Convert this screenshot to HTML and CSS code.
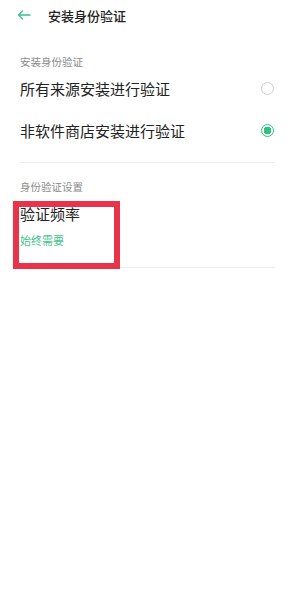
FILE: index.html
```html
<!DOCTYPE html>
<html lang="zh">
<head>
    <meta charset="UTF-8">
    <meta name="viewport" content="width=device-width, initial-scale=1.0">
    <title>安装身份验证</title>
    <link rel="stylesheet" href="styles.css">
</head>
<body>
    <!-- Header -->
    <div class="header">
        <svg class="back" width="14" height="10" viewBox="0 0 14 10">
            <path d="M13 5H1.5M5.5 1L1.5 5L5.5 9" fill="none" stroke="#3dbf8c" stroke-width="1.3" stroke-linecap="round" stroke-linejoin="round"/>
        </svg>
        <h1>安装身份验证</h1>
    </div>

    <!-- Install verification -->
    <div class="section-label first">安装身份验证</div>
    <div class="option">
        <span>所有来源安装进行验证</span>
        <span class="radio"></span>
    </div>
    <div class="option">
        <span>非软件商店安装进行验证</span>
        <span class="radio checked"></span>
    </div>
    <div class="divider"></div>

    <!-- Identity settings -->
    <div class="section-label">身份验证设置</div>
    <div class="item">
        <div class="item-title">验证频率</div>
        <div class="item-sub">始终需要</div>
        <div class="highlight"></div>
    </div>
    <div class="divider flush"></div>
</body>
</html>
```

FILE: styles.css
```css
* {
    margin: 0;
    padding: 0;
    box-sizing: border-box;
}

body {
    background: #fff;
    color: #222;
    font-family: "Noto Sans CJK SC", "Noto Sans", sans-serif;
    width: 295px;
    min-height: 600px;
}

/* Header */
.header {
    display: flex;
    align-items: center;
    height: 30px;
    padding-left: 17px;
}

.header .back {
    margin-right: 17px;
}

.header h1 {
    font-size: 13px;
    font-weight: 500;
    color: #222;
}

/* Sections */
.section-label {
    font-size: 10.5px;
    line-height: 15px;
    color: #8a8a8a;
    padding: 16px 20px 0;
    height: 34px;
}

.section-label.first {
    padding-top: 24px;
    height: 37px;
}

.option {
    display: flex;
    justify-content: space-between;
    align-items: center;
    height: 42px;
    padding: 0 20px;
    font-size: 15px;
}

.radio {
    width: 13px;
    height: 13px;
    border: 1.3px solid #cfcfcf;
    border-radius: 50%;
    margin-right: 1px;
}

.radio.checked {
    border-color: #2ec27e;
    background: radial-gradient(circle, #2ec27e 0 3.6px, #fff 4px);
}

.divider {
    height: 1px;
    background: #ececec;
    margin: 11px 20px 0;
}

.divider.flush {
    margin-top: 0;
}

.item {
    position: relative;
    padding: 6px 20px 0;
    height: 70px;
}

.item-title {
    font-size: 15px;
    line-height: 22px;
}

.item-sub {
    font-size: 11px;
    color: #47c48f;
    line-height: 16px;
    margin-top: 7px;
}

/* Annotation box */
.highlight {
    position: absolute;
    left: 13px;
    top: 4px;
    width: 107px;
    height: 68px;
    border: 6px solid #e8334b;
}
```
